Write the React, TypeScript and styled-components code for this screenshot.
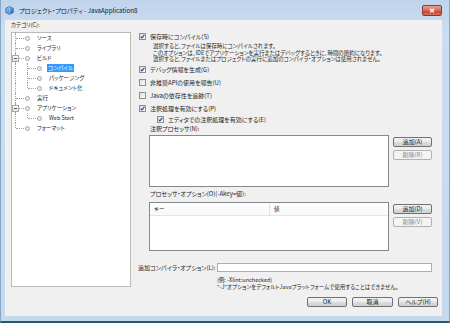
import React from 'react';
import styled, { createGlobalStyle } from 'styled-components';

const GlobalStyle = createGlobalStyle`
    html, body {
        margin: 0;
        padding: 0;
        background: #c6d9ee;
    }
    body {
        font-family: "Noto Sans CJK JP", "Noto Sans", sans-serif;
        font-feature-settings: "palt";
        font-size: 5.5px;
        color: #1e1e1e;
    }
`;

const Window = styled.div`
    width: 450px;
    height: 323px;
    box-sizing: border-box;
    display: flex;
    flex-direction: column;
    background: linear-gradient(#bfd3eb, #cbddf1 30px, #c4d8ee);
    border-left: 1px solid #8aa6c6;
    border-right: 1px solid #8aa6c6;
    border-bottom: 2px solid #23596c;
`;

const TitleBar = styled.div`
    height: 20px;
    display: flex;
    align-items: center;
    padding: 0 4px 0 4px;
    gap: 5px;
`;

const TitleText = styled.span`
    font-size: 6.2px;
    color: #101820;
`;

const CloseButton = styled.div`
    margin-left: auto;
    margin-right: 3px;
    width: 18px;
    height: 9px;
    border-radius: 2px;
    border: 1px solid #8a3b30;
    background: linear-gradient(#e6a293, #d66a55 50%, #c2402b 51%, #d3705a);
    display: flex;
    align-items: center;
    justify-content: center;
`;

const Client = styled.div`
    flex: 1;
    margin: 0 7px 5px 4px;
    background: #f0f0f0;
    display: grid;
    grid-template-columns: 126px 1fr;
    grid-template-rows: 1fr auto;
`;

const LeftColumn = styled.div`
    padding: 1px 0 0 6px;
`;

const Label = styled.div<{ $indent?: number; $mt?: number; $size?: number }>`
    height: 8px;
    line-height: 8px;
    font-size: ${(p) => p.$size ?? 6}px;
    margin-top: ${(p) => p.$mt ?? 0}px;
    padding-left: ${(p) => p.$indent ?? 0}px;
    white-space: nowrap;
`;

const TreeBox = styled.div`
    margin-top: 3px;
    width: 120px;
    height: 255px;
    box-sizing: border-box;
    border: 1px solid #b9b9b9;
    background: #ffffff;
`;

const TreeRow = styled.div`
    height: 10px;
    display: flex;
    align-items: center;
`;

const Cell = styled.span<{ $kind: 'pipe' | 'tee' | 'elbow' | 'blank' }>`
    position: relative;
    width: 12px;
    height: 10px;
    flex: none;
    &::before {
        content: '';
        position: absolute;
        left: 3px;
        top: 0;
        height: ${(p) => (p.$kind === 'elbow' ? '5px' : p.$kind === 'blank' ? '0' : '10px')};
        border-left: 1px dotted #a0a0a0;
    }
    &::after {
        content: '';
        position: absolute;
        left: 4px;
        top: 5px;
        width: ${(p) => (p.$kind === 'tee' || p.$kind === 'elbow' ? '8px' : '0')};
        border-top: 1px dotted #a0a0a0;
    }
`;

const Expander = styled.span`
    position: absolute;
    left: 0;
    top: 2px;
    width: 5px;
    height: 5px;
    border: 1px solid #a6a6a6;
    background: linear-gradient(#ffffff, #e4e4e4);
    z-index: 1;
    &::after {
        content: '';
        position: absolute;
        left: 1px;
        top: 2px;
        width: 3px;
        border-top: 1px solid #555;
    }
`;

const Bullet = styled.span`
    width: 3px;
    height: 3px;
    margin-left: 1px;
    border-radius: 50%;
    border: 1px solid #a8a8a8;
    background: #ececec;
    flex: none;
`;

const NodeText = styled.span<{ $selected?: boolean }>`
    margin-left: ${(p) => (p.$selected ? 5 : 6)}px;
    padding: 0 1px;
    line-height: 8px;
    white-space: nowrap;
    background: ${(p) => (p.$selected ? '#3399ff' : 'transparent')};
    color: ${(p) => (p.$selected ? '#ffffff' : '#1e1e1e')};
`;

const RightColumn = styled.div`
    padding: 10px 10px 0 4px;
    display: flex;
    flex-direction: column;
`;

const CheckRow = styled.div<{ $indent?: number; $h?: number; $mt?: number }>`
    height: ${(p) => p.$h ?? 13}px;
    margin-top: ${(p) => p.$mt ?? 0}px;
    display: flex;
    align-items: center;
    gap: 4px;
    padding-left: ${(p) => p.$indent ?? 4}px;
    font-size: 6px;
    white-space: nowrap;
`;

const Box = styled.span`
    width: 5px;
    height: 5px;
    border: 1px solid #8e8f8f;
    background: linear-gradient(135deg, #dcdcdc, #ffffff);
    display: flex;
    align-items: center;
    justify-content: center;
    flex: none;
`;

const Description = styled.div`
    margin-top: 0;
    padding-left: 18px;
    line-height: 6.5px;
    white-space: nowrap;
`;

const Line = styled.div``;

const ListRow = styled.div<{ $mt: number }>`
    margin-top: ${(p) => p.$mt}px;
    padding-left: 14px;
    display: flex;
`;

const ListArea = styled.div<{ $h: number }>`
    width: 240px;
    height: ${(p) => p.$h}px;
    box-sizing: border-box;
    border: 1px solid #828790;
    background: #ffffff;
`;

const TableHead = styled.div`
    height: 12px;
    display: grid;
    grid-template-columns: 119px 1fr;
    border-bottom: 1px solid #e5e5e5;
    background: linear-gradient(#ffffff, #f7f8fa);
`;

const HeadCell = styled.div`
    padding-left: 4px;
    line-height: 12px;
    & + & {
        border-left: 1px solid #e2e2e2;
    }
`;

const SideButtons = styled.div`
    margin-left: 4px;
    padding-top: 2px;
    display: flex;
    flex-direction: column;
    gap: 3px;
`;

const Button = styled.button<{ $w?: number }>`
    width: ${(p) => p.$w ?? 39}px;
    height: 10px;
    padding: 0;
    box-sizing: border-box;
    border: 1px solid #707070;
    border-radius: 2px;
    background: linear-gradient(#f2f2f2, #ebebeb 50%, #dddddd 51%, #cfcfcf);
    font-family: inherit;
    font-feature-settings: "palt";
    font-size: 6px;
    line-height: 8px;
    color: #1e1e1e;
    &:disabled {
        border-color: #adb2b5;
        background: #f4f4f4;
        color: #8b8b8b;
    }
`;

const InputRow = styled.div`
    margin-top: 12px;
    padding-left: 3px;
    display: flex;
    align-items: center;
`;

const InputLabel = styled.span`
    width: 79px;
    font-size: 6px;
    white-space: nowrap;
`;

const TextInput = styled.div`
    flex: 1;
    height: 9px;
    box-sizing: border-box;
    border: 1px solid #abadb3;
    background: #ffffff;
`;

const Notes = styled.div`
    margin-top: 5px;
    padding-left: 82px;
    line-height: 6.5px;
    white-space: nowrap;
`;

const Footer = styled.div`
    grid-column: 1 / span 2;
    display: flex;
    justify-content: flex-end;
    gap: 5px;
    padding: 0 4px 9px 0;
`;

const Check = ({ checked }: { checked: boolean }) => (
    <Box>
        {checked && (
            <svg width="5" height="5" viewBox="0 0 5 5">
                <polyline points="0.6,2.6 1.9,3.9 4.4,0.8" fill="none" stroke="#23469a" strokeWidth="1.1" />
            </svg>
        )}
    </Box>
);

type Node = { cells: ('pipe' | 'tee' | 'elbow' | 'blank')[]; text: string; expander?: boolean; selected?: boolean };

const tree: Node[] = [
    { cells: ['tee'], text: 'ソース' },
    { cells: ['tee'], text: 'ライブラリ' },
    { cells: ['tee'], text: 'ビルド', expander: true },
    { cells: ['pipe', 'tee'], text: 'コンパイル', selected: true },
    { cells: ['pipe', 'tee'], text: 'パッケージング' },
    { cells: ['pipe', 'elbow'], text: 'ドキュメント化' },
    { cells: ['tee'], text: '実行' },
    { cells: ['tee'], text: 'アプリケーション', expander: true },
    { cells: ['pipe', 'elbow'], text: 'Web Start' },
    { cells: ['elbow'], text: 'フォーマット' },
];

export default function App() {
    return (
        <>
            <GlobalStyle />
            <Window>
                <TitleBar>
                    <svg width="9" height="9" viewBox="0 0 9 9">
                        <defs>
                            <linearGradient id="ic" x1="0" y1="0" x2="1" y2="1">
                                <stop offset="0" stopColor="#9fd0f5" />
                                <stop offset="1" stopColor="#1d5fae" />
                            </linearGradient>
                        </defs>
                        <path d="M4.5 0.5 L8.3 2.4 L8.3 6.4 L4.5 8.5 L0.7 6.4 L0.7 2.4 Z" fill="url(#ic)" stroke="#2b4f7c" strokeWidth="0.6" />
                        <path d="M4.5 0.8 L4.5 8.3" stroke="#e8f4ff" strokeWidth="0.5" opacity="0.7" />
                    </svg>
                    <TitleText>プロジェクト・プロパティ - JavaApplication8</TitleText>
                    <CloseButton>
                        <svg width="6" height="5" viewBox="0 0 6 5">
                            <path d="M1 0.8 L5 4.2 M5 0.8 L1 4.2" stroke="#ffffff" strokeWidth="1.3" />
                        </svg>
                    </CloseButton>
                </TitleBar>
                <Client>
                    <LeftColumn>
                        <Label $size={5.5}>カテゴリ(C):</Label>
                        <TreeBox>
                            {tree.map((n) => (
                                <TreeRow key={n.text}>
                                    {n.cells.map((c, i) => (
                                        <Cell key={i} $kind={c}>
                                            {n.expander && i === 0 && <Expander />}
                                        </Cell>
                                    ))}
                                    <Bullet />
                                    <NodeText $selected={n.selected}>{n.text}</NodeText>
                                </TreeRow>
                            ))}
                        </TreeBox>
                    </LeftColumn>
                    <RightColumn>
                        <CheckRow>
                            <Check checked />
                            保存時にコンパイル(S)
                        </CheckRow>
                        <Description>
                            <Line>選択すると、ファイルは保存時にコンパイルされます。</Line>
                            <Line>このオプションは、IDEでアプリケーションを実行またはデバッグするときに、時間の節約になります。</Line>
                            <Line>選択すると、ファイルまたはプロジェクトの実行に追加のコンパイラ・オプションは使用されません。</Line>
                        </Description>
                        <CheckRow>
                            <Check checked />
                            デバッグ情報を生成(G)
                        </CheckRow>
                        <CheckRow>
                            <Check checked={false} />
                            非推奨APIの使用を報告(U)
                        </CheckRow>
                        <CheckRow>
                            <Check checked={false} />
                            Javaの依存性を追跡(T)
                        </CheckRow>
                        <CheckRow>
                            <Check checked />
                            注釈処理を有効にする(P)
                        </CheckRow>
                        <CheckRow $indent={22} $h={10}>
                            <Check checked />
                            エディタでの注釈処理を有効にする(E)
                        </CheckRow>
                        <Label $indent={15}>注釈プロセッサ(N):</Label>
                        <ListRow $mt={2.5}>
                            <ListArea $h={52} />
                            <SideButtons>
                                <Button>追加(A)</Button>
                                <Button disabled>削除(R)</Button>
                            </SideButtons>
                        </ListRow>
                        <Label $indent={15} $mt={3}>
                            プロセッサ・オプション(O)(-Akey=値):
                        </Label>
                        <ListRow $mt={4}>
                            <ListArea $h={49}>
                                <TableHead>
                                    <HeadCell>キー</HeadCell>
                                    <HeadCell>値</HeadCell>
                                </TableHead>
                            </ListArea>
                            <SideButtons>
                                <Button>追加(D)</Button>
                                <Button disabled>削除(V)</Button>
                            </SideButtons>
                        </ListRow>
                        <InputRow>
                            <InputLabel>追加コンパイラ・オプション(L):</InputLabel>
                            <TextInput />
                        </InputRow>
                        <Notes>
                            <Line>(例: -Xlint:unchecked)</Line>
                            <Line>"-J"オプションをデフォルトJavaプラットフォームで使用することはできません。</Line>
                        </Notes>
                    </RightColumn>
                    <Footer>
                        <Button $w={40}>OK</Button>
                        <Button $w={41}>取消</Button>
                        <Button $w={40}>ヘルプ(H)</Button>
                    </Footer>
                </Client>
            </Window>
        </>
    );
}
